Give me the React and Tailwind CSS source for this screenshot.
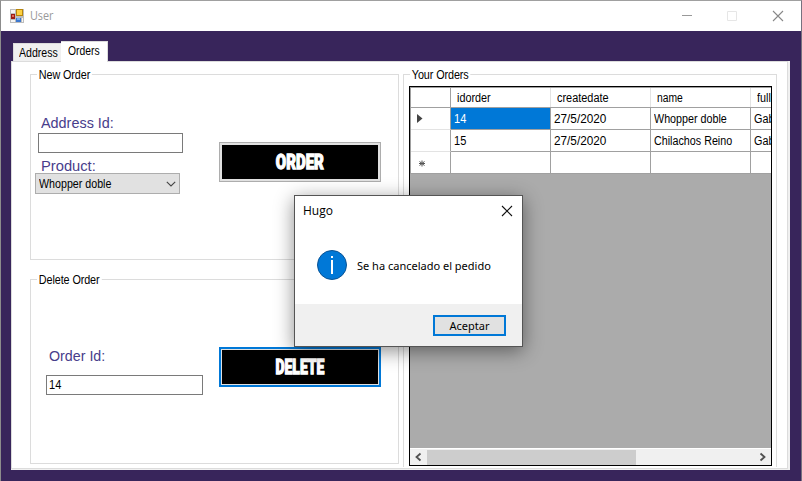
import React from 'react';

function GroupBox({ title, className, children }) {
  return (
    <fieldset className={`relative min-w-0 border border-[#dcdcdc] ${className}`}>
      <span className="absolute -top-[7px] left-[6px] h-[13px] origin-left scale-x-[0.9] bg-white px-[2px] text-[12px] leading-[14px] tracking-[-0.1px] whitespace-nowrap">{title}</span>
      {children}
    </fieldset>
  );
}

function ActionButton({ label, active, textClass }) {
  return (
    <button className={`flex h-[40px] w-[162px] shrink-0 bg-[#e1e1e1] ${active ? 'border-2 border-[#0078d7] p-px' : 'border border-[#adadad] p-[2px]'}`}>
      <span className="flex h-full w-full items-center justify-center bg-black text-white">
        <span className={`block font-['Roboto',sans-serif] text-[20.500px] leading-[24px] font-black [-webkit-text-stroke:1.3px_white] ${textClass}`}>{label}</span>
      </span>
    </button>
  );
}

function TitleBar() {
  return (
    <header className="flex h-[30px] shrink-0 items-center bg-white pl-[9px]">
      <svg width="14" height="14" viewBox="0 0 14 14" className="shrink-0" shapeRendering="crispEdges">
        <path d="M0 0H14V14H0Z" fill="#bdbdbd" />
        <path d="M1 1H5V4H1ZM1 11H5V13H1ZM12 9H13V13H12Z" fill="#f5f5f5" />
        <path d="M6 0H13V7H6Z" fill="#b8860b" />
        <path d="M7 1H12V6H7Z" fill="#fdd142" />
        <path d="M1 5H5V10H1Z" fill="#9c1c14" />
        <path d="M2 6H4V8H2Z" fill="#e26a58" />
        <path d="M6 9H11V13H6Z" fill="#3c78d0" />
        <path d="M7 9H10V11H7Z" fill="#78b0f0" />
      </svg>
      <span className="ml-[6px] grow origin-left scale-x-[0.9] font-['Open_Sans',sans-serif] text-[12px] leading-[16px] text-[#999]">User</span>
      <svg width="103" height="12" viewBox="0 0 103 12" className="mr-[16px] shrink-0" fill="none">
        <path d="M0 5.500H10" stroke="#999" />
        <path d="M45.500 1.500H54.500V10.500H45.500Z" stroke="#e6e6e6" />
        <path d="M91 1L101 11M101 1L91 11" stroke="#888" strokeWidth="1.1" />
      </svg>
    </header>
  );
}

const rows = [
  { mark: 'current', id: '14', date: '27/5/2020', name: 'Whopper doble', full: 'Gabriel' },
  { mark: '', id: '15', date: '27/5/2020', name: 'Chilachos Reino', full: 'Gabriel' },
  { mark: 'new', id: '', date: '', name: '', full: '' },
];

function Mark({ kind }) {
  return (
    <svg width="10" height="11" viewBox="0 0 10 11" className="ml-[5px]">
      {kind === 'current' && <path d="M1 1L6.500 5.500L1 10Z" fill="#444" />}
      {kind === 'new' && <path d="M6 3.500V9.500M3.500 4.500L8.500 8.500M8.500 4.500L3.500 8.500M3 6.500H9" stroke="#555" />}
    </svg>
  );
}

function OrdersGrid() {
  return (
    <div className="flex h-[380px] w-[363px] flex-col overflow-hidden border border-black bg-[#ababab]">
      <div className="w-[441px] shrink-0 border-t border-l border-[#a0a0a0] bg-white text-[12px]">
        <div className="flex h-[20px] border-b border-[#a0a0a0] leading-[21px]">
          <span className="w-[40px] shrink-0 border-r border-[#a0a0a0]" />
          <span className="w-[100px] shrink-0 border-r border-[#e3e3e3] pl-[6px]"><span className="block origin-left scale-x-[0.9]">idorder</span></span>
          <span className="w-[100px] shrink-0 border-r border-[#e3e3e3] pl-[6px]"><span className="block origin-left scale-x-[0.91]">createdate</span></span>
          <span className="w-[100px] shrink-0 border-r border-[#e3e3e3] pl-[6px]"><span className="block origin-left scale-x-[0.86]">name</span></span>
          <span className="w-[100px] shrink-0 pl-[6px]"><span className="block origin-left scale-x-[0.9]">fullname</span></span>
        </div>
        {rows.map((r, i) => (
          <div key={i} className="flex h-[22px] leading-[22px]">
            <span className={`flex w-[40px] shrink-0 items-center border-r border-b border-r-[#a0a0a0] ${i === 2 ? 'border-b-[#a0a0a0]' : 'border-b-[#e3e3e3]'}`}><Mark kind={r.mark} /></span>
            <span className={`w-[100px] shrink-0 border-r border-b border-[#a0a0a0] pl-[3px] ${i === 0 ? 'bg-[#0078d7] text-white' : ''}`}><span className="block origin-left scale-x-[0.92]">{r.id}</span></span>
            <span className="w-[100px] shrink-0 border-r border-b border-[#a0a0a0] pl-[3px]"><span className="block origin-left scale-x-[0.98]">{r.date}</span></span>
            <span className="w-[100px] shrink-0 border-r border-b border-[#a0a0a0] pl-[3px] whitespace-nowrap"><span className="block origin-left scale-x-[0.895]">{r.name}</span></span>
            <span className="w-[100px] shrink-0 border-b border-[#a0a0a0] pl-[3px]"><span className="block origin-left scale-x-[0.9]">{r.full}</span></span>
          </div>
        ))}
      </div>
      <div className="mt-auto flex h-[17px] shrink-0 items-center border-t border-white bg-[#f0f0f0]">
        <svg width="17" height="16" viewBox="0 0 17 16" fill="none"><path d="M10.500 4.500L6.500 8L10.500 11.500" stroke="#505050" strokeWidth="1.8" /></svg>
        <span className="h-[15px] w-[209px] bg-[#cdcdcd]" />
        <svg width="17" height="16" viewBox="0 0 17 16" fill="none" className="ml-auto"><path d="M6.500 4.500L10.500 8L6.500 11.500" stroke="#505050" strokeWidth="1.8" /></svg>
      </div>
    </div>
  );
}

function MessageDialog() {
  return (
    <section className="absolute top-[194px] left-[293px] flex h-[152px] w-[229px] flex-col border border-[#555] bg-white font-['Open_Sans',sans-serif] shadow-[0_4px_18px_rgba(0,0,0,0.45)]">
      <div className="flex h-[30px] items-center pl-[8px]">
        <span className="grow text-[12px]">Hugo</span>
        <svg width="12" height="12" viewBox="0 0 12 12" className="mr-[9px]"><path d="M1 1L11 11M11 1L1 11" stroke="#111" strokeWidth="1.1" /></svg>
      </div>
      <div className="flex grow items-center pl-[22px]">
        <svg width="30" height="30" viewBox="0 0 30 30" className="shrink-0">
          <circle cx="15" cy="15" r="14.500" fill="#0078d7" stroke="#0b5394" />
          <path d="M14 6H16V8H14ZM14 10H16V24H14Z" fill="#fff" />
        </svg>
        <span className="ml-[10px] pt-[3px] font-['Noto_Sans',sans-serif] text-[11px] whitespace-nowrap">Se ha cancelado el pedido</span>
      </div>
      <div className="flex h-[42px] shrink-0 justify-end bg-[#f0f0f0] pt-[11px] pr-[16px]">
        <button className="h-[21px] w-[73px] border-2 border-[#0078d7] bg-[#e1e1e1] font-['Noto_Sans',sans-serif] text-[11px] leading-[17px]">Aceptar</button>
      </div>
    </section>
  );
}

export default function App() {
  return (
    <div className="relative flex h-[481px] w-[802px] flex-col overflow-hidden border-t border-r border-l border-t-[#a0a0a0] border-r-[#76717f] border-l-[#8c8c8c] bg-[#38255b] font-['Liberation_Sans',sans-serif] text-[12px] text-black">
      <TitleBar />
      <nav className="mt-[10px] flex h-[20px] shrink-0 items-end pl-[12px]">
        <span className="h-[18px] w-[48px] border-t border-l border-[#dcdcdc] bg-[#f0f0f0] pl-[5px] leading-[19px]"><span className="block origin-left scale-x-[0.88]">Address</span></span>
        <span className="z-10 -mb-px h-[21px] w-[47px] border-t border-r border-[#dcdcdc] bg-white pl-[7px] leading-[19px]"><span className="block origin-left scale-x-[0.86]">Orders</span></span>
      </nav>
      <main className="ml-[10px] flex h-[409px] w-[779px] border-r-2 border-b border-[#f0f0f0]">
        <div className="flex w-[777px] shrink-0 border border-[#dcdcdc] bg-white pt-[12px] pl-[18px]">
          <div className="flex w-[369px] shrink-0 flex-col">
            <GroupBox title="New Order" className="flex h-[186px]">
              <div className="mt-[40px] ml-[4px] w-[148px] shrink-0">
                <label className="ml-[6px] block h-[18px] origin-left scale-x-[0.96] text-[15px] leading-[16px] text-[#483d8b]">Address Id:</label>
                <div className="ml-[3px] h-[20px] w-[145px] border border-[#7a7a7a]" />
                <label className="mt-[4px] ml-[6px] block h-[16px] origin-left scale-x-[0.98] text-[15px] leading-[18px] text-[#483d8b]">Product:</label>
                <div className="flex h-[21px] w-[145px] items-center border border-[#adadad] bg-[#e1e1e1] pl-[3px]">
                  <span className="grow origin-left scale-x-[0.89]">Whopper doble</span>
                  <svg width="10" height="6" viewBox="0 0 10 6" fill="none" className="mr-[3px]"><path d="M0.800 0.800L5 5L9.200 0.800" stroke="#444" strokeWidth="1.1" /></svg>
                </div>
              </div>
              <div className="mt-[67px] ml-[36px]"><ActionButton label="ORDER" textClass="scale-x-[0.73]" /></div>
            </GroupBox>
            <GroupBox title="Delete Order" className="mt-[19px] flex h-[185px]">
              <div className="mt-[67px] ml-[15px] w-[157px] shrink-0">
                <label className="ml-[3px] block h-[28px] origin-left scale-x-[0.95] text-[15px] leading-[18px] text-[#483d8b]">Order Id:</label>
                <div className="h-[20px] w-[157px] border border-[#7a7a7a] pl-[2px] leading-[18px]"><span className="block origin-left scale-x-[0.92]">14</span></div>
              </div>
              <div className="mt-[67px] ml-[16px]"><ActionButton label="DELETE" active textClass="scale-x-[0.68]" /></div>
            </GroupBox>
          </div>
          <GroupBox title="Your Orders" className="ml-[4px] h-[393px] w-[374px] border-b-0 pt-[11px] pl-[5px]">
            <OrdersGrid />
          </GroupBox>
        </div>
      </main>
      <MessageDialog />
    </div>
  );
}
